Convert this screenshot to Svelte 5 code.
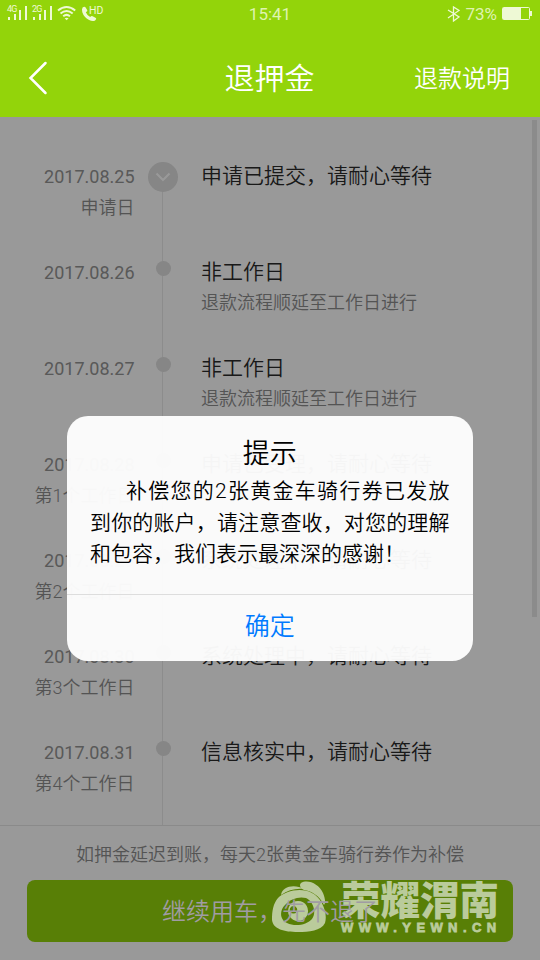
<script>
	const steps = [
		{ date: '2017.08.25', day: '申请日', title: '申请已提交，请耐心等待', current: true },
		{ date: '2017.08.26', title: '非工作日', note: '退款流程顺延至工作日进行' },
		{ date: '2017.08.27', title: '非工作日', note: '退款流程顺延至工作日进行' },
		{ date: '2017.08.28', day: '第1个工作日', title: '申请已受理，请耐心等待' },
		{ date: '2017.08.29', day: '第2个工作日', title: '系统处理中，请耐心等待' },
		{ date: '2017.08.30', day: '第3个工作日', title: '系统处理中，请耐心等待' },
		{ date: '2017.08.31', day: '第4个工作日', title: '信息核实中，请耐心等待' }
	];
</script>

<div class="screen">
	<header>
		<div class="status">
			<svg class="status-left" viewBox="0 0 110 26" width="110" height="26" fill="currentColor" aria-hidden="true">
				<text x="7" y="12" class="net">4G</text>
				<path d="M8 17h2v3H8zM14 14h2v6h-2zM19 10h2v10h-2zM25 6h2v14h-2z" />
				<text x="32" y="12" class="net">2G</text>
				<path d="M33 17h2v3h-2zM39 14h2v6h-2zM44 10h2v10h-2zM50 6h2v14h-2z" />
				<g fill="none" stroke="currentColor" stroke-width="2">
					<path d="M58 10.5q8.600-7 17.200 0M60.500 13.500q6.100-5 12.200 0M63.200 16.200q3.400-2.600 6.800 0" />
				</g>
				<path d="M64.600 18.300q2-1.200 4 0l-2 2z" />
				<path d="M82.600 7.600q2-1.800 3.200.2l1.500 2.500q.4 1.200-1.500 2 1.200 3 4.400 4.700 1.300-1.400 2.400-.7l3.300 1.800q1 1-.8 2.400-2.500 1.400-6-.5-5.300-3-6.800-7.800-.8-3 .3-4.600z" />
				<text x="89" y="14" class="hd">HD</text>
			</svg>
			<span class="time">15:41</span>
			<div class="status-right">
				<svg viewBox="0 0 13 16" width="13" height="16" fill="none" stroke="currentColor" stroke-width="1.300" aria-hidden="true">
					<path d="M1 4l11 7-5.500 4V1L12 4.500 1 12" />
				</svg>
				<span class="percent">73%</span>
				<svg viewBox="0 0 30 13" width="30" height="13" aria-hidden="true">
					<rect x=".5" y=".5" width="27" height="12" rx="1" fill="none" stroke="currentColor" />
					<path d="M1 1h18v11H1zM28 4h2v5h-2z" fill="currentColor" />
				</svg>
			</div>
		</div>
		<nav>
			<button class="back" aria-label="返回">
				<svg viewBox="0 0 20 34" width="20" height="34" fill="none" stroke="currentColor" stroke-width="2.500" stroke-linecap="round">
					<path d="M17.500 2 2.500 17l15 15" />
				</svg>
			</button>
			<h1>退押金</h1>
			<a class="help" href="#help">退款说明</a>
		</nav>
	</header>

	<main>
		<ol class="timeline">
			{#each steps as step}
				<li>
					<div class="when">
						<span class="date">{step.date}</span>
						<span>{step.day ?? ''}</span>
					</div>
					<div class="rail">
						{#if step.current}
							<span class="node current">
								<svg viewBox="0 0 16 10" width="16" height="10" fill="none" stroke="currentColor" stroke-width="2.200">
									<path d="M1.500 1.500 8 8l6.500-6.500" />
								</svg>
							</span>
						{:else}
							<span class="node"></span>
						{/if}
					</div>
					<div class="what">
						<strong>{step.title}</strong>
						<span>{step.note ?? ''}</span>
					</div>
				</li>
			{/each}
		</ol>

		<footer>
			<p>如押金延迟到账，每天2张黄金车骑行券作为补偿</p>
			<button>
				<span class="watermark">
					<svg viewBox="0 0 56 54" width="56" height="54" fill="currentColor" aria-hidden="true">
						<path fill-rule="evenodd" d="M7 18C14 11 30 7 41 13C51 18 57 33 54 43C50 51 38 52 27 52C13 52 2 49 1 40C1 31 2 24 7 18zM14 25C8 31 9 40 16 43C24 47 36 45 41 39C46 32 42 21 35 18C28 16 19 19 14 25z" />
						<path fill-rule="evenodd" d="M27 21a10 10 0 1 0 .1 0zM22.500 26a3.800 3.800 0 1 1-.1 0z" />
						<path d="M10 15C11 6 24 4 33 9C25 8 17 10 10 15zM30 3C37-1 48 4 52 13C54 18 55 23 53 25C48 15 40 11 33 10C29 8 28 5 30 3z" />
					</svg>
					<span class="brand">
						<b>荣耀渭南</b>
						<small>WWW.YEWN.CN</small>
					</span>
				</span>
				<span class="label">继续用车，先不退了</span>
			</button>
		</footer>

		<i class="scrollbar"></i>
		<div class="mask"></div>
	</main>

	<div class="dialog" role="alertdialog">
		<h2>提示</h2>
		<p>补偿您的2张黄金车骑行券已发放到你的账户，请注意查收，对您的理解和包容，我们表示最深深的感谢！</p>
		<button>确定</button>
	</div>
</div>

<style>
	:global(body) {
		margin: 0;
	}
	.screen {
		position: relative;
		display: flex;
		flex-direction: column;
		width: 540px;
		height: 960px;
		overflow: hidden;
		background: #fff;
		font-family: Roboto, 'Noto Sans CJK SC', sans-serif;
		font-weight: 350;
	}
	h1,
	h2,
	p,
	ol {
		margin: 0;
		padding: 0;
		font-weight: inherit;
	}
	button {
		padding: 0;
		border: 0;
		background: none;
		color: inherit;
		font: inherit;
	}
	svg {
		display: block;
	}

	header {
		height: 117px;
		background: #93d40a;
		color: #fff;
	}
	.status {
		display: grid;
		grid-template-columns: 1fr auto 1fr;
		height: 27px;
		align-items: center;
		color: #eef9d5;
		font-size: 17px;
	}
	.status-left {
		align-self: start;
	}
	.net {
		font: 9px Roboto, sans-serif;
		letter-spacing: -0.8px;
	}
	.hd {
		font: 10.5px Roboto, sans-serif;
	}
	.time,
	.percent {
		color: #dff3b0;
		font-weight: 400;
	}
	.status-right {
		display: flex;
		justify-content: flex-end;
		align-items: center;
		gap: 5px;
		padding-right: 8px;
	}
	nav {
		display: grid;
		grid-template-columns: 1fr auto 1fr;
		align-items: center;
		height: 90px;
		padding: 0 30px 0 28px;
	}
	.back {
		justify-self: start;
		padding-top: 12px;
	}
	h1 {
		padding: 14px 0 0 1px;
		font-size: 30px;
		line-height: 40px;
	}
	.help {
		justify-self: end;
		padding-top: 14px;
		color: inherit;
		font-size: 24px;
		line-height: 40px;
		text-decoration: none;
	}

	main {
		position: relative;
		display: flex;
		flex-direction: column;
		flex: 1;
	}
	.timeline {
		box-sizing: border-box;
		height: 708px;
		padding-top: 43px;
		list-style: none;
		overflow: hidden;
	}
	li {
		display: grid;
		grid-template-columns: 134px 58px 1fr;
		height: 96px;
	}
	.when,
	.what {
		display: flex;
		flex-direction: column;
		color: #8c8c8c;
		font-size: 18px;
		line-height: 32px;
	}
	.when {
		margin-right: -0.5px;
		text-align: right;
	}
	.date {
		padding-top: 1px;
		color: #949494;
		font-weight: 400;
		line-height: 31px;
	}
	.what {
		padding-left: 9px;
	}
	.what strong {
		padding-top: 1px;
		color: #2a2a2a;
		font-size: 21px;
		font-weight: inherit;
		line-height: 30px;
	}
	.rail {
		display: flex;
		justify-content: center;
		align-items: flex-start;
		background: linear-gradient(#e9e9e9, #e9e9e9) 28px 0 / 1px 100% no-repeat;
	}
	li:first-child .rail {
		background-position: 28px 30px;
	}
	li:last-child .rail {
		height: 105px;
	}
	.node {
		width: 15px;
		height: 15px;
		margin-top: 5px;
		border-radius: 50%;
		background: #dfdfdf;
	}
	.node.current {
		display: grid;
		place-items: center;
		width: 30px;
		height: 30px;
		margin-top: 2px;
		color: #fff;
	}
	footer {
		box-sizing: border-box;
		flex: 1;
		padding: 11px 27px 0;
		border-top: 1px solid #e6e6e6;
		text-align: center;
	}
	footer p {
		color: #8c8c8c;
		font-size: 18px;
		line-height: 36px;
	}
	footer button {
		position: relative;
		z-index: 1;
		display: block;
		width: 486px;
		height: 62px;
		margin-top: 7px;
		border-radius: 8px;
		background: #587f06;
		color: #a09ca3;
		font-size: 24px;
	}
	.label {
		position: relative;
		display: block;
		padding-bottom: 3px;
	}
	.scrollbar {
		position: absolute;
		top: 3px;
		right: 3px;
		width: 5px;
		height: 497px;
		background: #e8e8e8;
	}
	.mask {
		position: absolute;
		inset: 0;
		background: rgba(0, 0, 0, 0.4);
	}

	.dialog {
		position: absolute;
		top: 416px;
		left: 67px;
		display: flex;
		flex-direction: column;
		width: 405.5px;
		height: 245px;
		border-radius: 21px;
		background: rgba(253, 253, 253, 0.97);
		color: #000;
		text-align: center;
	}
	.dialog h2 {
		padding-top: 18px;
		font-size: 27px;
		line-height: 40px;
	}
	.dialog p {
		height: 118px;
		padding: 2px 23px 0;
		font-size: 21px;
		line-height: 31.500px;
		text-align: justify;
		text-indent: 36px;
	}
	.dialog button {
		flex: 1;
		padding-bottom: 8px;
		border-top: 1px solid #ddd;
		color: #007aff;
		font-size: 25px;
	}

	.watermark {
		position: absolute;
		top: 0;
		left: 244px;
		display: flex;
		gap: 14px;
		color: #bacb9b;
		text-align: left;
	}
	.brand {
		display: flex;
		flex-direction: column;
	}
	.brand b {
		padding-top: 1px;
		font-size: 39.5px;
		font-weight: 900;
		line-height: 42px;
	}
	.brand small {
		margin-top: -2px;
		font: bold 13px/14px 'Liberation Sans', sans-serif;
		letter-spacing: 5.4px;
		-webkit-text-stroke: 0.8px currentColor;
	}
</style>
